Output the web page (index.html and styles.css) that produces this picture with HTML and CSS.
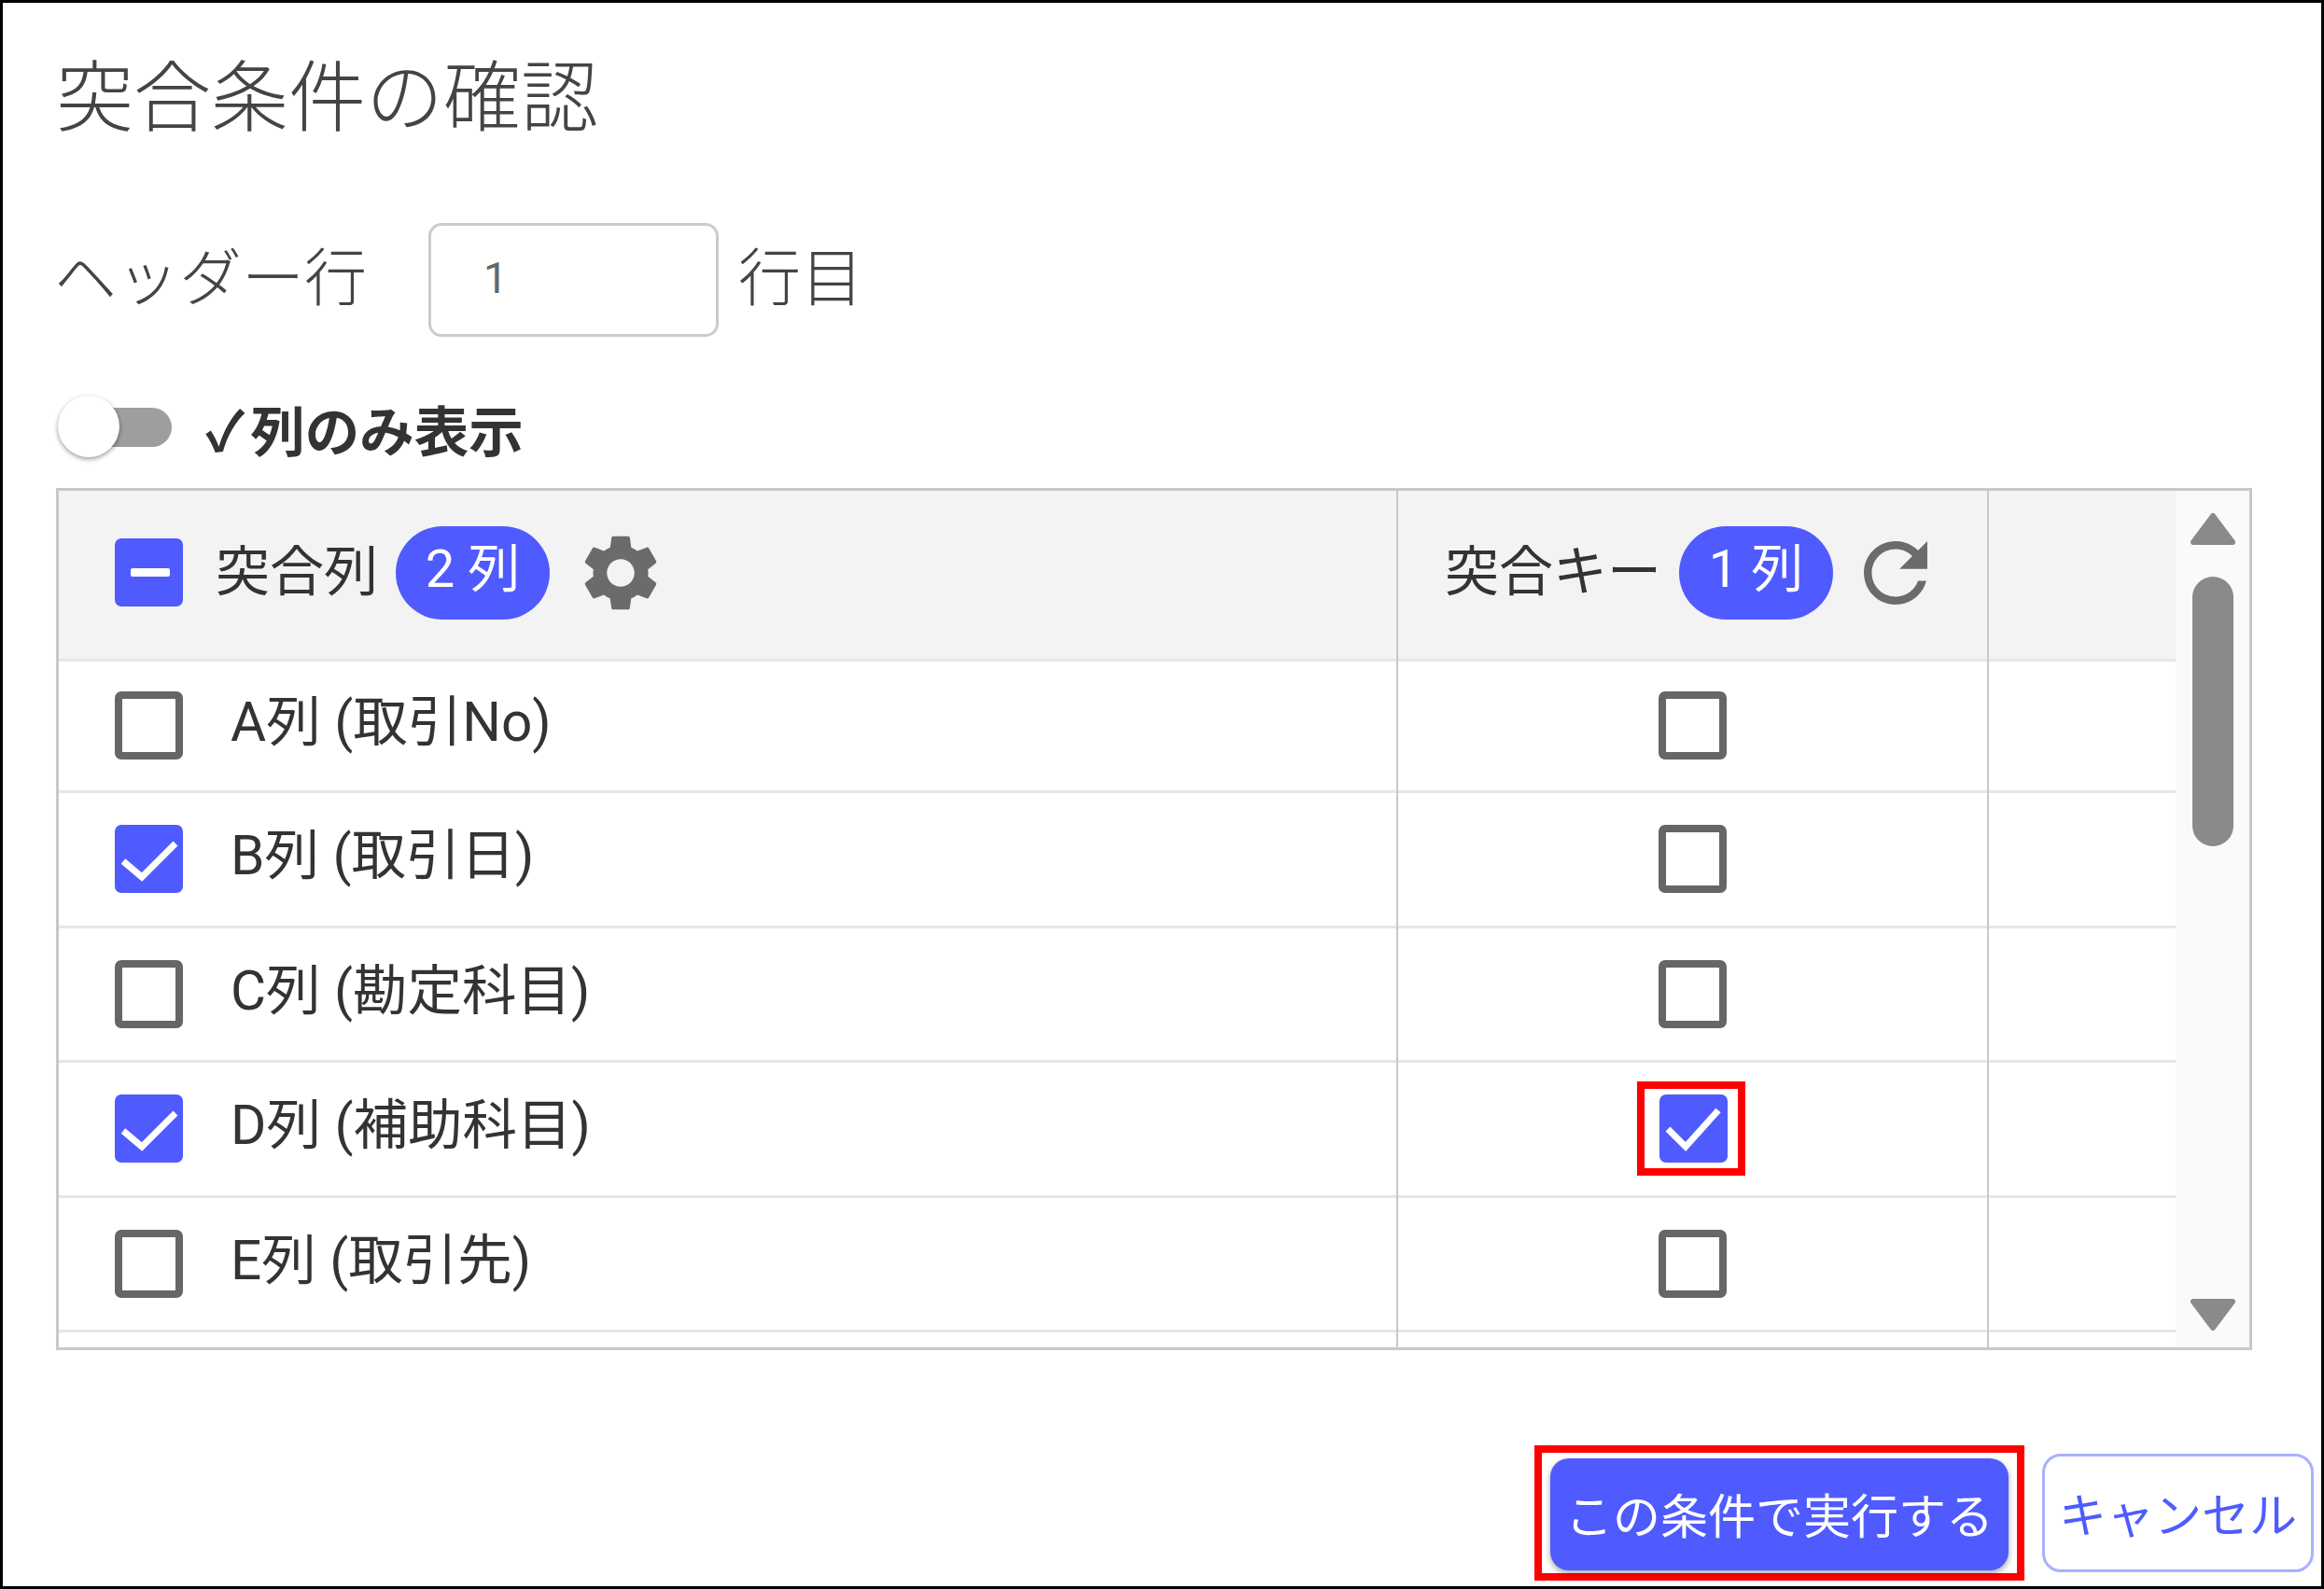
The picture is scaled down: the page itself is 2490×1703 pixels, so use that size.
FILE: index.html

```html
<!DOCTYPE html>
<html lang="ja">
<head>
  <meta charset="UTF-8">
  <title>突合条件の確認</title>
  <link rel="stylesheet" href="styles.css">
</head>
<body>
  <div class="dialog">
    <h1 class="title">突合条件の確認</h1>

    <div class="header-line">
      <label class="header-label" for="headerRow">ヘッダー行</label>
      <input class="header-input" id="headerRow" type="text" value="1">
      <span class="header-unit">行目</span>
    </div>

    <div class="toggle-line">
      <span class="toggle"><span class="toggle-knob"></span></span>
      <span class="toggle-label"><span class="toggle-tick">✓</span>列のみ表示</span>
    </div>

    <div class="table-box">
      <div class="table-rows">
        <div class="row row-head">
          <div class="cell cell-name">
            <span class="check on">
              <svg viewBox="0 0 73 73"><rect x="17" y="32" width="42" height="9" rx="2" fill="#fff"/></svg>
            </span>
            <span class="head-text">突合列</span>
            <span class="pill">2 列</span>
            <svg class="gear" viewBox="2.5 2 19 20"><path d="M19.14 12.94c.04-.3.06-.61.06-.94 0-.32-.02-.64-.07-.94l2.03-1.58c.18-.14.23-.41.12-.61l-1.92-3.32c-.12-.22-.37-.29-.59-.22l-2.39.96c-.5-.38-1.03-.7-1.62-.94l-.36-2.54c-.04-.24-.24-.41-.48-.41h-3.84c-.24 0-.43.17-.47.41l-.36 2.54c-.59.24-1.13.57-1.62.94l-2.39-.96c-.22-.08-.47 0-.59.22L2.74 8.87c-.12.21-.08.47.12.61l2.03 1.58c-.05.3-.09.63-.09.94s.02.64.07.94l-2.03 1.58c-.18.14-.23.41-.12.61l1.92 3.32c.12.22.37.29.59.22l2.39-.96c.5.38 1.03.7 1.62.94l.36 2.54c.05.24.24.41.48.41h3.84c.24 0 .44-.17.47-.41l.36-2.54c.59-.24 1.13-.56 1.62-.94l2.39.96c.22.08.47 0 .59-.22l1.92-3.32c.12-.22.07-.47-.12-.61l-2.01-1.58zM12 15.6c-1.98 0-3.6-1.62-3.6-3.6s1.62-3.6 3.6-3.6 3.6 1.62 3.6 3.6-1.62 3.6-3.6 3.6z"/></svg>
          </div>
          <div class="cell cell-key-head">
            <span class="head-text">突合キー</span>
            <span class="pill">1 列</span>
            <svg class="refresh" viewBox="4 4 16 16"><path d="M17.65 6.35C16.2 4.9 14.21 4 12 4c-4.42 0-7.99 3.58-7.99 8s3.57 8 7.99 8c3.73 0 6.84-2.55 7.73-6h-2.08c-.82 2.33-3.04 4-5.65 4-3.31 0-6-2.69-6-6s2.69-6 6-6c1.66 0 3.14.69 4.22 1.78L13 11h7V4l-2.35 2.35z"/></svg>
          </div>
          <div class="cell"></div>
        </div>

        <div class="row row-first">
          <div class="cell cell-name"><span class="check"></span><span class="row-text">A列 (取引No)</span></div>
          <div class="cell cell-key"><span class="check"></span></div>
          <div class="cell"></div>
        </div>
        <div class="row">
          <div class="cell cell-name">
            <span class="check on"><svg viewBox="0 0 73 73"><path class="tick" d="M9 39 L29 56 L65 20"/></svg></span>
            <span class="row-text">B列 (取引日)</span>
          </div>
          <div class="cell cell-key"><span class="check"></span></div>
          <div class="cell"></div>
        </div>
        <div class="row">
          <div class="cell cell-name"><span class="check"></span><span class="row-text">C列 (勘定科目)</span></div>
          <div class="cell cell-key"><span class="check"></span></div>
          <div class="cell"></div>
        </div>
        <div class="row">
          <div class="cell cell-name">
            <span class="check on"><svg viewBox="0 0 73 73"><path class="tick" d="M9 39 L29 56 L65 20"/></svg></span>
            <span class="row-text">D列 (補助科目)</span>
          </div>
          <div class="cell cell-key">
            <span class="mark mark-check">
              <span class="check on"><svg viewBox="0 0 73 73"><path class="tick" d="M9 37 L28 56 L63 17"/></svg></span>
            </span>
          </div>
          <div class="cell"></div>
        </div>
        <div class="row">
          <div class="cell cell-name"><span class="check"></span><span class="row-text">E列 (取引先)</span></div>
          <div class="cell cell-key"><span class="check"></span></div>
          <div class="cell"></div>
        </div>
        <div class="row row-rest">
          <div class="cell cell-name"></div>
          <div class="cell cell-key"></div>
          <div class="cell"></div>
        </div>
      </div>

      <div class="scrollbar">
        <svg class="arrow" viewBox="0 0 50 36"><polygon points="25,4 46,32 4,32"/></svg>
        <div class="thumb"></div>
        <svg class="arrow arrow-down" viewBox="0 0 50 36"><polygon points="4,4 46,4 25,32"/></svg>
      </div>
    </div>

    <div class="footer">
      <span class="mark mark-button"><button class="btn btn-run" type="button">この条件で実行する</button></span>
      <button class="btn btn-cancel" type="button">キャンセル</button>
    </div>
  </div>
</body>
</html>
```

FILE: styles.css

```css
* {
  box-sizing: border-box;
}
body {
  margin: 0;
  background: #fff;
  color: #333;
  font-family: Roboto, "Noto Sans CJK JP", sans-serif;
}
.dialog {
  width: 2490px;
  height: 1703px;
  border: 3px solid #000;
  padding: 0 8px 0 57px;
  display: flex;
  flex-direction: column;
}
.title {
  margin: 53px 0 0;
  height: 100px;
  font-size: 83px;
  line-height: 100px;
  font-weight: 300;
  color: #444;
}
.header-line {
  display: flex;
  align-items: center;
  margin-top: 83px;
  font-size: 67px;
  font-weight: 300;
  color: #444;
}
.header-label {
  width: 399px;
  margin-left: -2px;
  padding-bottom: 15px;
}
.header-input {
  width: 311px;
  height: 122px;
  margin-left: 2px;
  padding: 0 0 5px 56px;
  border: 3px solid #ccc;
  border-radius: 14px;
  font-family: Roboto, sans-serif;
  font-size: 46px;
  color: #666;
  background: #fff;
}
.header-unit {
  margin-left: 21px;
  padding-bottom: 15px;
}
.toggle-line {
  display: flex;
  align-items: center;
  height: 68px;
  margin-top: 63px;
}
.toggle {
  display: block;
  position: relative;
  width: 114px;
  height: 42px;
  margin-left: 10px;
  border-radius: 21px;
  background: #9e9e9e;
}
.toggle-knob {
  position: absolute;
  left: -8px;
  top: -13px;
  width: 66px;
  height: 66px;
  border-radius: 50%;
  background: #fff;
  box-shadow: 0 2px 5px rgba(0,0,0,0.4);
}
.toggle-label {
  margin-left: 36px;
  font-size: 58.5px;
  font-weight: 700;
  color: #333;
}
.toggle-tick {
  margin-right: 6px;
}
.table-box {
  display: flex;
  height: 924px;
  margin: 31px 66px 0 0;
  border: 3px solid #c8c8c8;
  overflow: hidden;
}
.table-rows {
  width: 2268px;
  display: flex;
  flex-direction: column;
}
.row {
  display: grid;
  grid-template-columns: 1435px 633px 1fr;
  height: 144.5px;
  border-bottom: 3px solid #e6e6e6;
}
.row-head {
  height: 182.5px;
  background: #f3f3f3;
}
.row-first {
  height: 141.5px;
}
.row-rest {
  flex: 1;
  height: auto;
  border-bottom: 0;
}
.cell {
  display: flex;
  align-items: center;
  padding-bottom: 3px;
}
.cell-name, .cell-key, .cell-key-head {
  border-right: 2px solid #c8c8c8;
}
.row .cell {
  margin-bottom: -3px;
}
.row-head .cell {
  padding-bottom: 7px;
}
.cell-name {
  padding-left: 60px;
}
.cell-key {
  justify-content: center;
}
.cell-key-head {
  padding-left: 50px;
}
.check {
  flex: none;
  display: block;
  width: 73px;
  height: 73px;
  border: 8px solid #666;
  border-radius: 7px;
  background: #fff;
}
.check.on {
  border: 0;
  background: #4f5bff;
}
.check svg {
  display: block;
  width: 73px;
  height: 73px;
}
.tick {
  fill: none;
  stroke: #fff;
  stroke-width: 7;
}
.head-text {
  padding-bottom: 12px;
  font-size: 58px;
  color: #333;
}
.cell-name .head-text {
  margin-left: 35px;
}
.pill {
  flex: none;
  width: 165px;
  height: 100px;
  margin-left: 19px;
  border-radius: 50px;
  background: #4f5bff;
  color: #fff;
  font-size: 56px;
  line-height: 92px;
  text-align: center;
}
.gear {
  width: 78px;
  height: 82px;
  margin-left: 37px;
  fill: #6b6b6b;
}
.refresh {
  width: 68px;
  height: 68px;
  margin-left: 33px;
  fill: #6b6b6b;
}
.row-text {
  margin-left: 51px;
  padding-bottom: 18px;
  font-size: 58.5px;
  color: #333;
}
.mark {
  display: block;
  border: 8px solid #f00;
  background: #fff;
}
.mark-check {
  margin-right: 3px;
  padding: 6px 11px 6px 16px;
}
.scrollbar {
  flex: 1;
  display: flex;
  flex-direction: column;
  align-items: center;
  padding: 23px 0 17px;
  background: #fafafa;
}
.arrow {
  display: block;
  width: 50px;
  height: 36px;
  fill: #8a8a8a;
  stroke: #8a8a8a;
  stroke-width: 6;
  stroke-linejoin: round;
}
.arrow-down {
  margin-top: auto;
}
.thumb {
  width: 44px;
  height: 289px;
  margin-top: 33px;
  border-radius: 22px;
  background: #8a8a8a;
}
.footer {
  display: flex;
  align-items: center;
  justify-content: flex-end;
  gap: 19px;
  margin-top: 102px;
}
.mark-button {
  padding: 6px 9px 3px;
}
.btn {
  display: block;
  font-family: Roboto, "Noto Sans CJK JP", sans-serif;
  font-size: 51px;
  padding: 0 0 2px;
  border-radius: 20px;
}
.btn-run {
  width: 491px;
  height: 120px;
  border: 0;
  background: #4f5bff;
  color: #fff;
  box-shadow: 0 3px 6px rgba(0,0,0,0.35);
}
.btn-cancel {
  width: 291px;
  height: 127px;
  border: 3px solid #a9b0ff;
  background: #fff;
  color: #4f5bff;
}
```
